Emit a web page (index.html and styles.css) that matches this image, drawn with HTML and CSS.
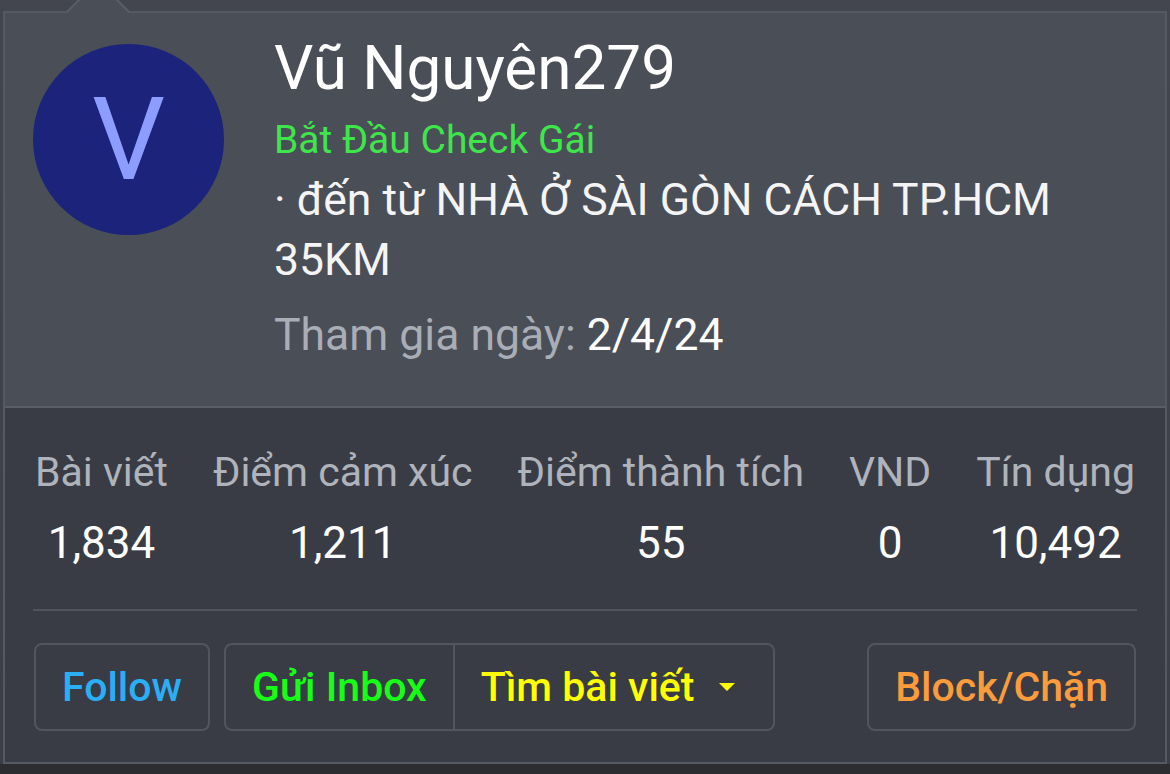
FILE: index.html
```html
<!DOCTYPE html>
<html lang="vi">
<head>
<meta charset="utf-8">
<title>Vũ Nguyên279</title>
<link rel="stylesheet" href="styles.css">
</head>
<body>
<div class="card">
  <div class="arrow"></div>
  <div class="top">
    <div class="avatar"><span>V</span></div>
    <div class="info">
      <div class="name">Vũ Nguyên279</div>
      <div class="title">Bắt Đầu Check Gái</div>
      <div class="location">· đến từ NHÀ Ở SÀI GÒN CÁCH TP.HCM 35KM</div>
      <div class="joined"><span class="muted">Tham gia ngày:</span> 2/4/24</div>
    </div>
  </div>
  <div class="bottom">
    <div class="stats">
      <div class="stat"><div class="label">Bài viết</div><div class="value">1,834</div></div>
      <div class="stat"><div class="label">Điểm cảm xúc</div><div class="value">1,211</div></div>
      <div class="stat"><div class="label">Điểm thành tích</div><div class="value">55</div></div>
      <div class="stat"><div class="label">VND</div><div class="value">0</div></div>
      <div class="stat"><div class="label">Tín dụng</div><div class="value">10,492</div></div>
    </div>
    <div class="divider"></div>
    <div class="actions">
      <button class="btn btn-follow">Follow</button>
      <div class="group">
        <button class="btn-in btn-inbox">Gửi Inbox</button>
        <button class="btn-in btn-find">Tìm bài viết <span class="caret"></span></button>
      </div>
      <button class="btn btn-block">Block/Chặn</button>
    </div>
  </div>
</div>
</body>
</html>
```
FILE: styles.css
```css
html, body {
  margin: 0;
  padding: 0;
}
body {
  width: 1170px;
  height: 774px;
  overflow: hidden;
  background: linear-gradient(to bottom, #43464f 0, #3b3e46 764px, #2b2d31 764px);
  font-family: Roboto, "Noto Sans", sans-serif;
  color: #ffffff;
}
.card {
  position: relative;
  margin: 11px 0 0 3px;
  width: 1164px;
  box-sizing: border-box;
  border: 2px solid #565962;
}
.arrow {
  position: absolute;
  left: 70px;
  top: -24px;
  width: 46px;
  height: 46px;
  box-sizing: border-box;
  background: #4a4e57;
  border-top: 2px solid #5a5d66;
  border-left: 2px solid #5a5d66;
  transform: rotate(45deg);
}
.top {
  position: relative;
  display: flex;
  gap: 50px;
  background: #4a4e57;
  padding: 22px 28px 41px 28px;
  border-bottom: 2px solid #5b5e66;
}
.avatar {
  flex: none;
  width: 191px;
  height: 191px;
  margin-top: 9px;
  border-radius: 50%;
  background: #1b237b;
  display: flex;
  align-items: center;
  justify-content: center;
}
.avatar span {
  font-size: 115px;
  line-height: 1;
  color: #8c9dff;
}
.info {
  width: 840px;
}
.name {
  margin-top: 3px;
  font-size: 62px;
  line-height: 60px;
  color: #ffffff;
}
.title {
  margin-top: 12px;
  font-size: 39px;
  line-height: 60px;
  color: #3fe64b;
}
.location {
  font-size: 44.5px;
  line-height: 60px;
  color: #f4f4f5;
}
.joined {
  margin-top: 15px;
  font-size: 44.5px;
  line-height: 60px;
  color: #ffffff;
}
.muted {
  color: #a9adb6;
}
.bottom {
  background: #393c44;
  padding: 39px 28px 31px 28px;
}
.stats {
  display: flex;
  justify-content: space-between;
  padding: 0 2px;
}
.stat {
  display: flex;
  flex-direction: column;
  align-items: center;
}
.label {
  font-size: 41px;
  line-height: 50px;
  color: #afb3bb;
}
.value {
  margin-top: 18px;
  font-size: 44px;
  line-height: 56px;
  color: #ffffff;
}
.divider {
  margin-top: 38px;
  height: 2px;
  background: #51545c;
}
.actions {
  margin-top: 32px;
  display: flex;
  align-items: stretch;
  padding-left: 1px;
  padding-right: 1px;
}
.btn, .group {
  height: 88px;
  box-sizing: border-box;
  border: 2px solid #52555d;
  border-radius: 8px;
  background: #393c44;
}
.btn, .btn-in {
  font-family: Roboto, "Noto Sans", sans-serif;
  font-size: 41px;
  font-weight: 500;
  padding: 0 26px;
  display: flex;
  align-items: center;
  cursor: pointer;
}
.group {
  display: flex;
  margin-left: 14px;
  overflow: hidden;
}
.btn-in {
  border: 0;
  background: transparent;
  height: 100%;
}
.btn-find {
  border-left: 2px solid #52555d;
  padding-right: 38px;
}
.btn-follow { color: #2aaef5; }
.btn-inbox { color: #16ff16; }
.btn-find { color: #ffff00; }
.btn-block { color: #fb9b3c; margin-left: auto; }
.caret {
  display: inline-block;
  margin-left: 25px;
  width: 0;
  height: 0;
  border-left: 8px solid transparent;
  border-right: 8px solid transparent;
  border-top: 8px solid #ffff00;
}
```
